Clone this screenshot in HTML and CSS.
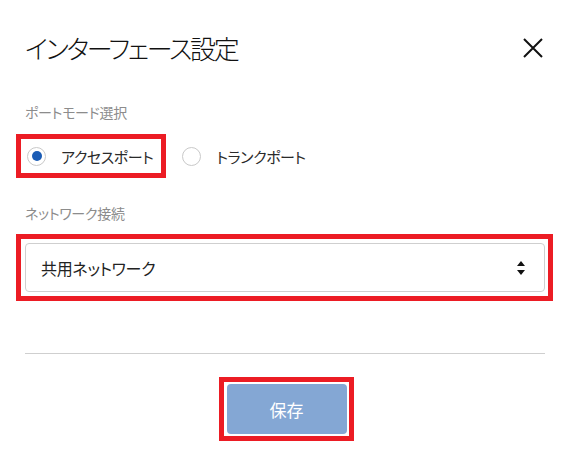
FILE: index.html
```html
<!DOCTYPE html>
<html lang="ja">
<head>
<meta charset="utf-8">
<title>インターフェース設定</title>
<link rel="stylesheet" href="styles.css">
</head>
<body>
<div class="dialog">
  <div class="header">
    <h1 class="title">インターフェース設定</h1>
    <button class="close" aria-label="閉じる">
      <svg width="20" height="20" viewBox="0 0 20 20"><path d="M1 1 L19 19 M19 1 L1 19" stroke="#111" stroke-width="2" fill="none"/></svg>
    </button>
  </div>

  <div class="field-label label-mode">ポートモード選択</div>
  <div class="radio-row">
    <div class="hl hl-radio">
      <label class="option">
        <span class="radio checked"></span>
        <span class="option-text">アクセスポート</span>
      </label>
    </div>
    <label class="option">
      <span class="radio"></span>
      <span class="option-text">トランクポート</span>
    </label>
  </div>

  <div class="field-label label-net">ネットワーク接続</div>
  <div class="hl hl-select">
    <div class="select">
      <span class="select-text">共用ネットワーク</span>
      <svg class="arrows" width="8" height="14" viewBox="0 0 8 14"><path d="M4 0 L8 5 L0 5 Z M0 9 L8 9 L4 14 Z" fill="#111"/></svg>
    </div>
  </div>

  <div class="divider"></div>

  <div class="footer">
    <div class="hl hl-btn">
      <button class="save">保存</button>
    </div>
  </div>
</div>
</body>
</html>
```

FILE: styles.css
```css
html, body {
  margin: 0;
  padding: 0;
  background: #fff;
}
body {
  font-family: "Noto Sans CJK JP", "Noto Sans", sans-serif;
  font-feature-settings: "palt";
  font-weight: 400;
  color: #222;
}
.dialog {
  width: 520px;
  padding: 0 24px 0 25px;
}
.header {
  margin-top: 28px;
  height: 40px;
  display: flex;
  align-items: center;
  justify-content: space-between;
}
.title {
  margin: 0;
  font-size: 26px;
  letter-spacing: -2.3px;
  font-weight: 300;
  line-height: 40px;
  color: #111;
}
.close {
  border: 0;
  background: none;
  padding: 0;
  margin-right: 2px;
  width: 20px;
  height: 20px;
  display: flex;
}
.field-label {
  font-size: 14px;
  letter-spacing: -0.3px;
  line-height: 20px;
  color: #8c8c8c;
}
.label-mode {
  margin-top: 34px;
}
.hl {
  border: 5px solid #ec1c24;
}
.radio-row {
  margin-top: 12px;
  margin-left: -9px;
  display: flex;
  align-items: center;
  gap: 16px;
}
.hl-radio {
  padding: 4px 8px 4px 6px;
}
.option {
  display: flex;
  align-items: center;
  height: 26px;
  gap: 15px;
  font-size: 15px;
  letter-spacing: -0.4px;
  color: #2a2a2a;
}
.radio {
  box-sizing: border-box;
  width: 19px;
  height: 19px;
  border: 1px solid #c9c9c9;
  border-radius: 50%;
  display: flex;
  align-items: center;
  justify-content: center;
}
.radio.checked::after {
  content: "";
  width: 10px;
  height: 10px;
  border-radius: 50%;
  background: #1b5cb5;
}
.label-net {
  margin-top: 25px;
}
.hl-select {
  margin: 11px -8px 0 -9px;
  padding: 4px 3px 4px 4px;
}
.select {
  box-sizing: border-box;
  height: 49px;
  border: 1px solid #cfcfcf;
  border-radius: 4px;
  display: flex;
  align-items: center;
  justify-content: space-between;
  padding: 0 19px 0 15px;
  font-size: 16px;
  letter-spacing: -0.3px;
  color: #222;
}
.divider {
  margin-top: 52px;
  height: 1px;
  background: #cfcfcf;
}
.footer {
  margin-top: 23px;
  display: flex;
  justify-content: center;
}
.hl-btn {
  padding: 2px 2px 2px 3px;
  margin-left: 2px;
  display: flex;
}
.save {
  width: 120px;
  height: 50px;
  border: 0;
  border-radius: 4px;
  background: #84a7d4;
  color: #fff;
  font-family: inherit;
  font-feature-settings: "palt";
  font-weight: 400;
  font-size: 17px;
}
```
